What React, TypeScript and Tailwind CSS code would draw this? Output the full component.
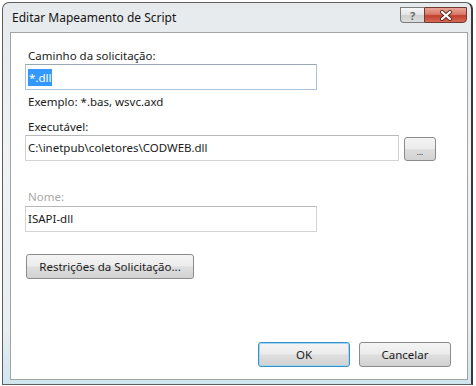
import React from "react";

const font = { fontFamily: '"Noto Sans", "Open Sans", sans-serif' };

function Btn({ children, className = "" }: { children: React.ReactNode; className?: string }) {
  return (
    <div
      className={
        "flex items-center justify-center rounded-[3px] border text-[11.5px] text-[#1b1b1b] bg-[linear-gradient(to_bottom,#f4f4f4_0%,#ececec_48%,#dedede_52%,#d2d2d2_100%)] " +
        className
      }
    >
      {children}
    </div>
  );
}

export default function App() {
  return (
    <div className="w-[476px] h-[386px] bg-white overflow-hidden" style={font}>
      <div className="ml-[2px] mt-[2px] w-[471px] h-[383px] border border-[#5e5e5e] border-r-2 border-r-[#3a3a3a] rounded-t-[7px] bg-[linear-gradient(to_bottom,#e6eaed_0%,#f1f3f5_40%,#e9eef1_85%,#cfe6ef_100%)] flex flex-col">
        {/* Title bar */}
        <div className="h-[29px] flex items-start pl-[9px] pr-[4px]">
          <div className="pt-[7px] text-[12px] leading-[16px] text-[#141414] flex-1">Editar Mapeamento de Script</div>
          <div className="mt-[4px] flex">
            <div className="w-[24px] h-[16px] rounded-bl-[4px] border border-[#7d7d7d] border-r-0 bg-[linear-gradient(to_bottom,#f7f7f7_0%,#e3e3e3_50%,#cfcfcf_52%,#dedede_100%)] flex items-center justify-center text-[11px] leading-none font-bold text-[#6a6a6a]">
              ?
            </div>
            <div className="w-[43px] h-[16px] rounded-br-[4px] border border-[#6e3a33] bg-[linear-gradient(to_bottom,#e9a597_0%,#d97a69_45%,#c2402f_55%,#d56a55_100%)] flex items-center justify-center">
              <svg width="14" height="11" viewBox="0 0 14 11">
                <path d="M3 2 L11 9 M11 2 L3 9" stroke="#5a2a22" strokeWidth="4" strokeLinecap="round" />
                <path d="M3 2 L11 9 M11 2 L3 9" stroke="#ffffff" strokeWidth="2.2" strokeLinecap="round" />
              </svg>
            </div>
          </div>
        </div>

        {/* Client area */}
        <div className="ml-[7px] w-[458px] h-[348px] border border-[#a3a3a3] bg-white flex flex-col pl-[14px] pt-[15px] pr-[16px] pb-[12px] text-[11.5px] text-[#1b1b1b]">
          <div className="ml-[3px] leading-[15px]">Caminho da solicitação:</div>
          <div className="mt-[1px] w-[292px] h-[26px] border border-[#abc3d8] border-t-[#9aa7b3] flex items-center pl-[2px]">
            <span className="bg-[#3399ff] text-white px-[1px] leading-[17px]">*.dll</span>
          </div>
          <div className="ml-[3px] mt-[4px] leading-[15px]">Exemplo: *.bas, wsvc.axd</div>
          <div className="ml-[3px] mt-[10px] leading-[15px]">Executável:</div>
          <div className="mt-[1px] flex items-start">
            <div className="w-[374px] h-[26px] border border-[#d3d3d3] border-t-[#b9b9b9] flex items-center pl-[2px]">
              C:\inetpub\coletores\CODWEB.dll
            </div>
            <Btn className="ml-[5px] mt-[2px] w-[32px] h-[24px] border-[#8b8b8b] items-end pb-[4px]">
              <span className="text-[8px] leading-none">...</span>
            </Btn>
          </div>
          <div className="ml-[3px] mt-[28px] leading-[15px] text-[#a8a8a8]">Nome:</div>
          <div className="mt-[2px] w-[292px] h-[26px] border border-[#d3d3d3] border-t-[#b9b9b9] flex items-center pl-[2px]">
            ISAPI-dll
          </div>
          <Btn className="mt-[22px] ml-[1px] w-[168px] h-[25px] border-[#8b8b8b]">Restrições da Solicitação...</Btn>
          <div className="mt-auto flex justify-end gap-[9px]">
            <Btn className="w-[92px] h-[25px] border-[#3c8fc4] shadow-[inset_0_0_0_1px_#9fd6f5]">OK</Btn>
            <Btn className="w-[92px] h-[25px] border-[#8b8b8b]">Cancelar</Btn>
          </div>
        </div>
      </div>
    </div>
  );
}
